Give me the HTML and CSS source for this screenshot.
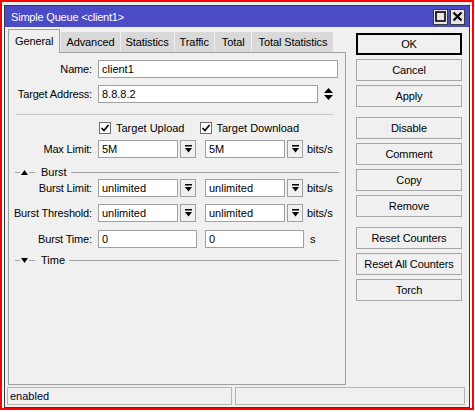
FILE: index.html
```html
<!DOCTYPE html>
<html>
<head>
<meta charset="utf-8">
<link rel="stylesheet" href="styles.css">
</head>
<body>
<div class="desktop">
  <div class="bg-strip"></div>
  <div class="frame"></div>
  <div class="window">
    <div class="titlebar">
      <span class="title">Simple Queue &lt;client1&gt;</span>
      <div class="tb-buttons">
        <span class="tb-btn"><svg width="11" height="11" viewBox="0 0 11 11"><rect x="1" y="1" width="9" height="9" fill="none" stroke="#000" stroke-width="1.6"/></svg></span>
        <span class="tb-btn"><svg width="11" height="11" viewBox="0 0 11 11"><path d="M1.5 1.5 L9.5 9.5 M9.5 1.5 L1.5 9.5" stroke="#000" stroke-width="2.2"/></svg></span>
      </div>
    </div>
    <div class="body">
      <div class="left">
        <div class="tabs">
          <div class="tab active">General</div>
          <div class="tab">Advanced</div>
          <div class="tab">Statistics</div>
          <div class="tab">Traffic</div>
          <div class="tab wide">Total</div>
          <div class="tab wide">Total Statistics</div>
        </div>
        <div class="panel">
          <div class="row">
            <div class="label">Name:</div>
            <div class="input w-name">client1</div>
          </div>
          <div class="row gap7">
            <div class="label">Target Address:</div>
            <div class="input w-target">8.8.8.2</div>
            <svg class="updown" width="9" height="12" viewBox="0 0 9 12"><polygon points="0,5 9,5 4.5,0" fill="#000"/><polygon points="0,7 9,7 4.5,12" fill="#000"/></svg>
          </div>
          <div class="sep"></div>
          <div class="row checks">
            <div class="label"></div>
            <div class="check">
              <span class="cbox"><svg width="10" height="10" viewBox="0 0 10 10"><path d="M1.5 5 L4 7.5 L8.5 2" fill="none" stroke="#000" stroke-width="1.7"/></svg></span>
              <span>Target Upload</span>
            </div>
            <div class="check second">
              <span class="cbox"><svg width="10" height="10" viewBox="0 0 10 10"><path d="M1.5 5 L4 7.5 L8.5 2" fill="none" stroke="#000" stroke-width="1.7"/></svg></span>
              <span>Target Download</span>
            </div>
          </div>
          <div class="row gap3">
            <div class="label">Max Limit:</div>
            <div class="input w-sel">5M</div>
            <span class="dd"><svg width="7" height="8" viewBox="0 0 7 8"><rect x="0" y="0" width="7" height="1.5" fill="#000"/><polygon points="0,3 7,3 3.5,7.5" fill="#000"/></svg></span>
            <div class="input w-sel second">5M</div>
            <span class="dd"><svg width="7" height="8" viewBox="0 0 7 8"><rect x="0" y="0" width="7" height="1.5" fill="#000"/><polygon points="0,3 7,3 3.5,7.5" fill="#000"/></svg></span>
            <span class="unit">bits/s</span>
          </div>
          <div class="section burst">
            <span class="dash d1"></span>
            <svg class="tri" width="7" height="5" viewBox="0 0 7 5"><polygon points="0,5 7,5 3.5,0" fill="#000"/></svg>
            <span class="dash d2"></span>
            <span class="sec-title">Burst</span>
            <span class="dash rest"></span>
          </div>
          <div class="row">
            <div class="label">Burst Limit:</div>
            <div class="input w-sel">unlimited</div>
            <span class="dd"><svg width="7" height="8" viewBox="0 0 7 8"><rect x="0" y="0" width="7" height="1.5" fill="#000"/><polygon points="0,3 7,3 3.5,7.5" fill="#000"/></svg></span>
            <div class="input w-sel second">unlimited</div>
            <span class="dd"><svg width="7" height="8" viewBox="0 0 7 8"><rect x="0" y="0" width="7" height="1.5" fill="#000"/><polygon points="0,3 7,3 3.5,7.5" fill="#000"/></svg></span>
            <span class="unit">bits/s</span>
          </div>
          <div class="row gap7">
            <div class="label">Burst Threshold:</div>
            <div class="input w-sel">unlimited</div>
            <span class="dd"><svg width="7" height="8" viewBox="0 0 7 8"><rect x="0" y="0" width="7" height="1.5" fill="#000"/><polygon points="0,3 7,3 3.5,7.5" fill="#000"/></svg></span>
            <div class="input w-sel second">unlimited</div>
            <span class="dd"><svg width="7" height="8" viewBox="0 0 7 8"><rect x="0" y="0" width="7" height="1.5" fill="#000"/><polygon points="0,3 7,3 3.5,7.5" fill="#000"/></svg></span>
            <span class="unit">bits/s</span>
          </div>
          <div class="row gap8">
            <div class="label">Burst Time:</div>
            <div class="input w-time">0</div>
            <div class="input w-time second2">0</div>
            <span class="unit u-s">s</span>
          </div>
          <div class="section time">
            <span class="dash d1"></span>
            <svg class="tri" width="7" height="5" viewBox="0 0 7 5"><polygon points="0,0 7,0 3.5,5" fill="#000"/></svg>
            <span class="dash d2"></span>
            <span class="sec-title">Time</span>
            <span class="dash rest"></span>
          </div>
        </div>
      </div>
      <div class="actions">
        <div class="btn default">OK</div>
        <div class="btn">Cancel</div>
        <div class="btn">Apply</div>
        <div class="btn group">Disable</div>
        <div class="btn">Comment</div>
        <div class="btn">Copy</div>
        <div class="btn">Remove</div>
        <div class="btn group">Reset Counters</div>
        <div class="btn">Reset All Counters</div>
        <div class="btn">Torch</div>
      </div>
    </div>
    <div class="status">
      <div class="field f-left">enabled</div>
      <div class="field f-right"></div>
    </div>
  </div>
</div>
</body>
</html>
```

FILE: styles.css
```css
* { box-sizing: border-box; }
html, body { margin: 0; padding: 0; }
body {
  font-family: "Liberation Sans", Arial, sans-serif;
  font-size: 11px;
  color: #000;
  background: #fff;
}
.desktop {
  position: relative;
  width: 475px;
  height: 412px;
  background: #fff;
  overflow: hidden;
}
.bg-strip {
  height: 6px;
  background: #eeeeee;
  border-bottom: 1px solid #cfcfcf;
}
.frame {
  position: absolute;
  left: 0;
  top: 0;
  width: 474px;
  height: 410px;
  border: 2px solid #ff0000;
}
.window {
  position: absolute;
  left: 4px;
  top: 5px;
  width: 466px;
  height: 403px;
  border: 1px solid #3a3a3a;
  background: #f0f0f0;
  display: flex;
  flex-direction: column;
}
.titlebar {
  height: 21px;
  background: #4b4bc6;
  color: #fff;
  display: flex;
  align-items: center;
  justify-content: space-between;
  padding: 0 4px 0 6px;
  font-size: 11px;
}
.title { letter-spacing: -0.2px; }
.tb-buttons { display: flex; gap: 2px; }
.tb-btn {
  width: 15px;
  height: 16px;
  background: #e6e6e6;
  border: 1px solid #3a3a3a;
  display: flex;
  align-items: center;
  justify-content: center;
}
.body {
  flex: 1;
  display: flex;
  padding: 2px 7px 0 3px;
}
.left {
  width: 338px;
  display: flex;
  flex-direction: column;
}
.tabs {
  height: 23px;
  display: flex;
  align-items: flex-end;
}
.tab {
  height: 20px;
  line-height: 20px;
  padding: 0 5px;
  background: #d9d9d9;
  margin-right: 1px;
  letter-spacing: -0.1px;
}
.tab.wide { padding: 0 6px 0 7px; }
.tab.active {
  height: 24px;
  line-height: 23px;
  margin-bottom: -1px;
  background: #f0f0f0;
  border: 1px solid #a0a0a0;
  border-bottom: none;
  padding: 0 6px 0 6px;
  position: relative;
  z-index: 1;
}
.panel {
  height: 333px;
  border: 1px solid #a0a0a0;
  padding: 7px 6px 0 0;
}
.row {
  display: flex;
  align-items: center;
  height: 18px;
}
.gap7 { margin-top: 7px; }
.gap3 { margin-top: 3px; }
.gap8 { margin-top: 8px; }
.label {
  width: 83px;
  text-align: right;
  margin-right: 6px;
  letter-spacing: -0.15px;
  white-space: nowrap;
}
.input {
  height: 18px;
  border: 1px solid #a0a0a0;
  background: #fff;
  padding-left: 3px;
  line-height: 16px;
  white-space: nowrap;
  overflow: hidden;
}
.w-name { width: 240px; }
.w-target { width: 220px; }
.updown { margin-left: 6px; }
.sep {
  margin: 11px 6px 0 7px;
  height: 1px;
  background: #c8c8c8;
}
.checks { margin-top: 4px; }
.check {
  display: flex;
  align-items: center;
  gap: 5px;
  margin-left: 1px;
}
.check.second { margin-left: 15px; }
.cbox {
  width: 12px;
  height: 12px;
  border: 1px solid #6e6e6e;
  background: #fff;
  display: flex;
  align-items: center;
  justify-content: center;
}
.w-sel { width: 80px; }
.w-sel.second { margin-left: 9px; }
.dd {
  width: 16px;
  height: 18px;
  margin-left: 2px;
  border: 1px solid #a0a0a0;
  background: #f0f0f0;
  display: flex;
  align-items: center;
  justify-content: center;
}
.unit { margin-left: 4px; }
.u-s { margin-left: 6px; }
.w-time { width: 99px; }
.w-time.second2 { margin-left: 8px; }
.section {
  display: flex;
  align-items: center;
  height: 14px;
  padding-left: 6px;
}
.burst { margin-top: 7px; }
.time { margin-top: 5px; }
.dash {
  height: 1px;
  background: #a0a0a0;
}
.d1 { width: 5px; margin-right: 1px; }
.d2 { width: 6px; margin-left: 1px; }
.sec-title { margin: 0 4px 0 6px; }
.rest { flex: 1; }
.actions {
  width: 106px;
  margin-left: 10px;
  padding-top: 4px;
  display: flex;
  flex-direction: column;
  gap: 4px;
}
.btn {
  height: 22px;
  border: 1px solid #a7a7a7;
  background: #f0f0f0;
  display: flex;
  align-items: center;
  justify-content: center;
  white-space: nowrap;
  letter-spacing: -0.1px;
}
.btn.default {
  border: 2px solid #000;
}
.btn.group { margin-top: 6px; }
.status {
  height: 22px;
  display: flex;
  gap: 3px;
  padding: 2px 4px 2px 2px;
}
.field {
  height: 18px;
  border: 1px solid #b4b4b4;
  background: #f0f0f0;
  line-height: 16px;
  padding-left: 2px;
  color: #000030;
}
.f-left { width: 225px; }
.f-right { flex: 1; }
```
